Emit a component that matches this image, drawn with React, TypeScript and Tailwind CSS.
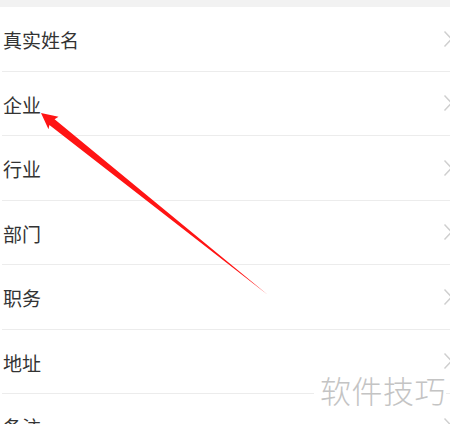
const rows = ["真实姓名", "企业", "行业", "部门", "职务", "地址", "备注"];

function Chevron() {
  return (
    <svg
      width="10"
      height="18"
      viewBox="0 0 10 18"
      className="shrink-0 -mr-[3px]"
      fill="none"
    >
      <path d="M1.5 1.5 L8.5 9 L1.5 16.5" stroke="#cfcfcf" strokeWidth="1.4" />
    </svg>
  );
}

export default function App() {
  return (
    <div
      className="relative h-[424px] w-[450px] overflow-hidden bg-white"
      style={{ fontFamily: '"Noto Sans CJK SC", "Noto Sans", sans-serif' }}
    >
      <div className="h-[7px] bg-[#f2f2f2]" />
      <div className="flex flex-col pl-[2px]">
        {rows.map((label) => (
          <div
            key={label}
            className="flex h-[64.5px] items-center justify-between border-b border-[#ececec]"
          >
            <span className="pl-px pt-[2px] text-[19px] leading-none text-[#333333]">
              {label}
            </span>
            <Chevron />
          </div>
        ))}
      </div>

      {/* red arrow */}
      <svg
        className="pointer-events-none absolute left-0 top-0"
        width="450"
        height="424"
        viewBox="0 0 450 424"
      >
        <polygon
          points="41,113 58.5,116.8 54.6,119.2 268,295 49.4,125 48.5,129.2"
          fill="#ff1414"
        />
      </svg>

      {/* watermark */}
      <div className="absolute right-[4px] top-[370px] bg-white pl-[6px] text-[31px] font-light leading-[40px] tracking-[0.5px] text-[#c4c4c4]">
        软件技巧
      </div>
    </div>
  );
}
